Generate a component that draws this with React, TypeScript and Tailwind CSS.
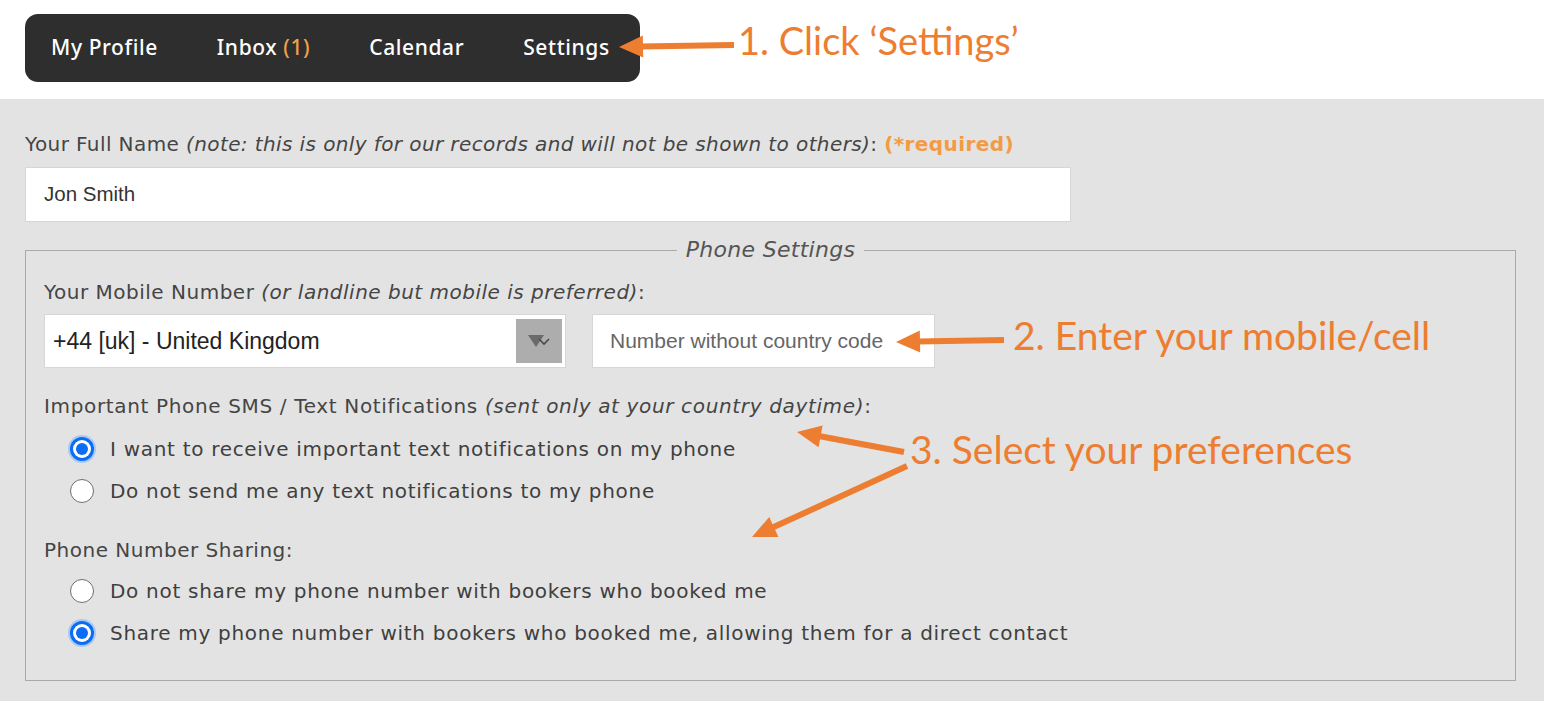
import React from 'react'

const ui = { fontFamily: '"DejaVu Sans", "Noto Sans", sans-serif' }
const nav = { fontFamily: '"Noto Sans", "Open Sans", sans-serif' }
const arial = { fontFamily: '"Liberation Sans", Arial, sans-serif' }
const callout = { fontFamily: 'Lato, "Open Sans", sans-serif' }

const ORANGE = '#ed7d31'

// arrow from tail (x1,y1) to tip (x2,y2)
function Arrow({ x1, y1, x2, y2 }: { x1: number; y1: number; x2: number; y2: number }) {
  const dx = x2 - x1
  const dy = y2 - y1
  const len = Math.hypot(dx, dy)
  const ux = dx / len
  const uy = dy / len
  const headLen = 24
  const headHalf = 11
  const bx = x2 - ux * headLen
  const by = y2 - uy * headLen
  const px = -uy
  const py = ux
  const pts = `${x2},${y2} ${bx + px * headHalf},${by + py * headHalf} ${bx - px * headHalf},${by - py * headHalf}`
  return (
    <g>
      <line x1={x1} y1={y1} x2={bx + ux * 2} y2={by + uy * 2} stroke={ORANGE} strokeWidth={6} />
      <polygon points={pts} fill={ORANGE} />
    </g>
  )
}

function Radio({ checked, label }: { checked?: boolean; label: string }) {
  return (
    <label className="flex items-center gap-[16px] h-[42px] pl-[26px]">
      {checked ? (
        <span className="w-[24px] h-[24px] rounded-full bg-[#0b6cf5] ring-[2px] ring-[#a9c8f7] flex items-center justify-center">
          <span className="w-[18px] h-[18px] rounded-full bg-white flex items-center justify-center">
            <span className="w-[12px] h-[12px] rounded-full bg-[#0b6cf5]" />
          </span>
        </span>
      ) : (
        <span className="w-[24px] h-[24px] rounded-full bg-white border-[1.5px] border-[#6e6e6e]" />
      )}
      <span className="text-[20px] tracking-[0.7px] text-[#3f3f3f]">{label}</span>
    </label>
  )
}

export default function App() {
  return (
    <div className="relative w-[1544px] h-[701px] bg-white overflow-hidden" style={ui}>
      {/* top bar */}
      <div className="h-[99px] pt-[14px] pl-[25px]">
        <nav
          className="w-[615px] h-[68px] rounded-[13px] bg-[#2e2e2e] flex items-center gap-[59px] pl-[26px] text-white text-[21px] font-medium tracking-[0.6px]"
          style={nav}
        >
          <span>My Profile</span>
          <span>
            Inbox <span className="text-[#f0a04b]">(1)</span>
          </span>
          <span>Calendar</span>
          <span>Settings</span>
        </nav>
      </div>

      {/* form */}
      <div className="bg-[#e3e3e3] h-[602px] pl-[25px] pr-[28px] pt-[34px]">
        <div className="text-[20px] tracking-[0.4px] text-[#454545] leading-[22px]">
          Your Full Name <i>(note: this is only for our records and will not be shown to others)</i>:{' '}
          <b className="text-[#f39a45]">(*required)</b>
        </div>
        <div className="mt-[12px] w-[1046px] h-[55px] bg-white border border-[#d6d6d6] flex items-center pl-[18px] text-[20.5px] text-[#333]" style={arial}>
          Jon Smith
        </div>

        <fieldset className="mt-[14px] w-[1491px] h-[445px] border border-[#a9a9a9]">
          <legend className="mx-auto px-[9px] text-[22px] tracking-[0.3px] leading-[28px] italic text-[#555]">Phone Settings</legend>

          <div className="pl-[18px]">
            <div className="mt-[17px] text-[20px] tracking-[0.5px] text-[#454545] leading-[22px]">
              Your Mobile Number <i>(or landline but mobile is preferred)</i>:
            </div>
            <div className="mt-[11px] flex gap-[26px]">
              <div className="w-[522px] h-[54px] bg-white border border-[#d6d6d6] flex items-center justify-between pl-[8px] pr-[3px]">
                <span className="text-[23px] text-[#222]" style={arial}>+44 [uk] - United Kingdom</span>
                <span className="w-[46px] h-[44px] bg-[#adadad] flex items-center justify-center">
                  <svg width="30" height="20" viewBox="0 0 30 20">
                    <polygon points="4,4 20,4 12,16" fill="#6a6a6a" />
                    <polyline points="15,8 20,13 25,8" fill="none" stroke="#4a4a4a" strokeWidth="1.6" />
                  </svg>
                </span>
              </div>
              <div className="w-[343px] h-[54px] bg-white border border-[#d6d6d6] flex items-center pl-[17px] text-[21px] text-[#666]" style={arial}>
                Number without country code
              </div>
            </div>

            <div className="mt-[27px] text-[20px] tracking-[0.65px] text-[#454545] leading-[22px]">
              Important Phone SMS / Text Notifications <i>(sent only at your country daytime)</i>:
            </div>
            <div className="mt-[11px]">
              <Radio checked label="I want to receive important text notifications on my phone" />
              <Radio label="Do not send me any text notifications to my phone" />
            </div>

            <div className="mt-[27px] text-[20px] tracking-[0.5px] text-[#454545] leading-[22px]">Phone Number Sharing:</div>
            <div className="mt-[9px]">
              <Radio label="Do not share my phone number with bookers who booked me" />
              <Radio checked label="Share my phone number with bookers who booked me, allowing them for a direct contact" />
            </div>
          </div>
        </fieldset>
      </div>

      {/* annotations */}
      <div className="absolute left-[738px] top-[18px] text-[38px] leading-[44px] text-[#ed7d31]" style={callout}>
        1. Click ‘Settings’
      </div>
      <div className="absolute left-[1013px] top-[313px] text-[39px] leading-[44px] text-[#ed7d31]" style={callout}>
        2. Enter your mobile/cell
      </div>
      <div className="absolute left-[910px] top-[427px] text-[39px] leading-[44px] text-[#ed7d31]" style={callout}>
        3. Select your preferences
      </div>
      <svg className="absolute inset-0 pointer-events-none" width="1544" height="701">
        <Arrow x1={734} y1={45} x2={619} y2={47} />
        <Arrow x1={1004} y1={340} x2={896} y2={342} />
        <Arrow x1={904} y1={452} x2={797} y2={432} />
        <Arrow x1={907} y1={466} x2={752} y2={537} />
      </svg>
    </div>
  )
}
